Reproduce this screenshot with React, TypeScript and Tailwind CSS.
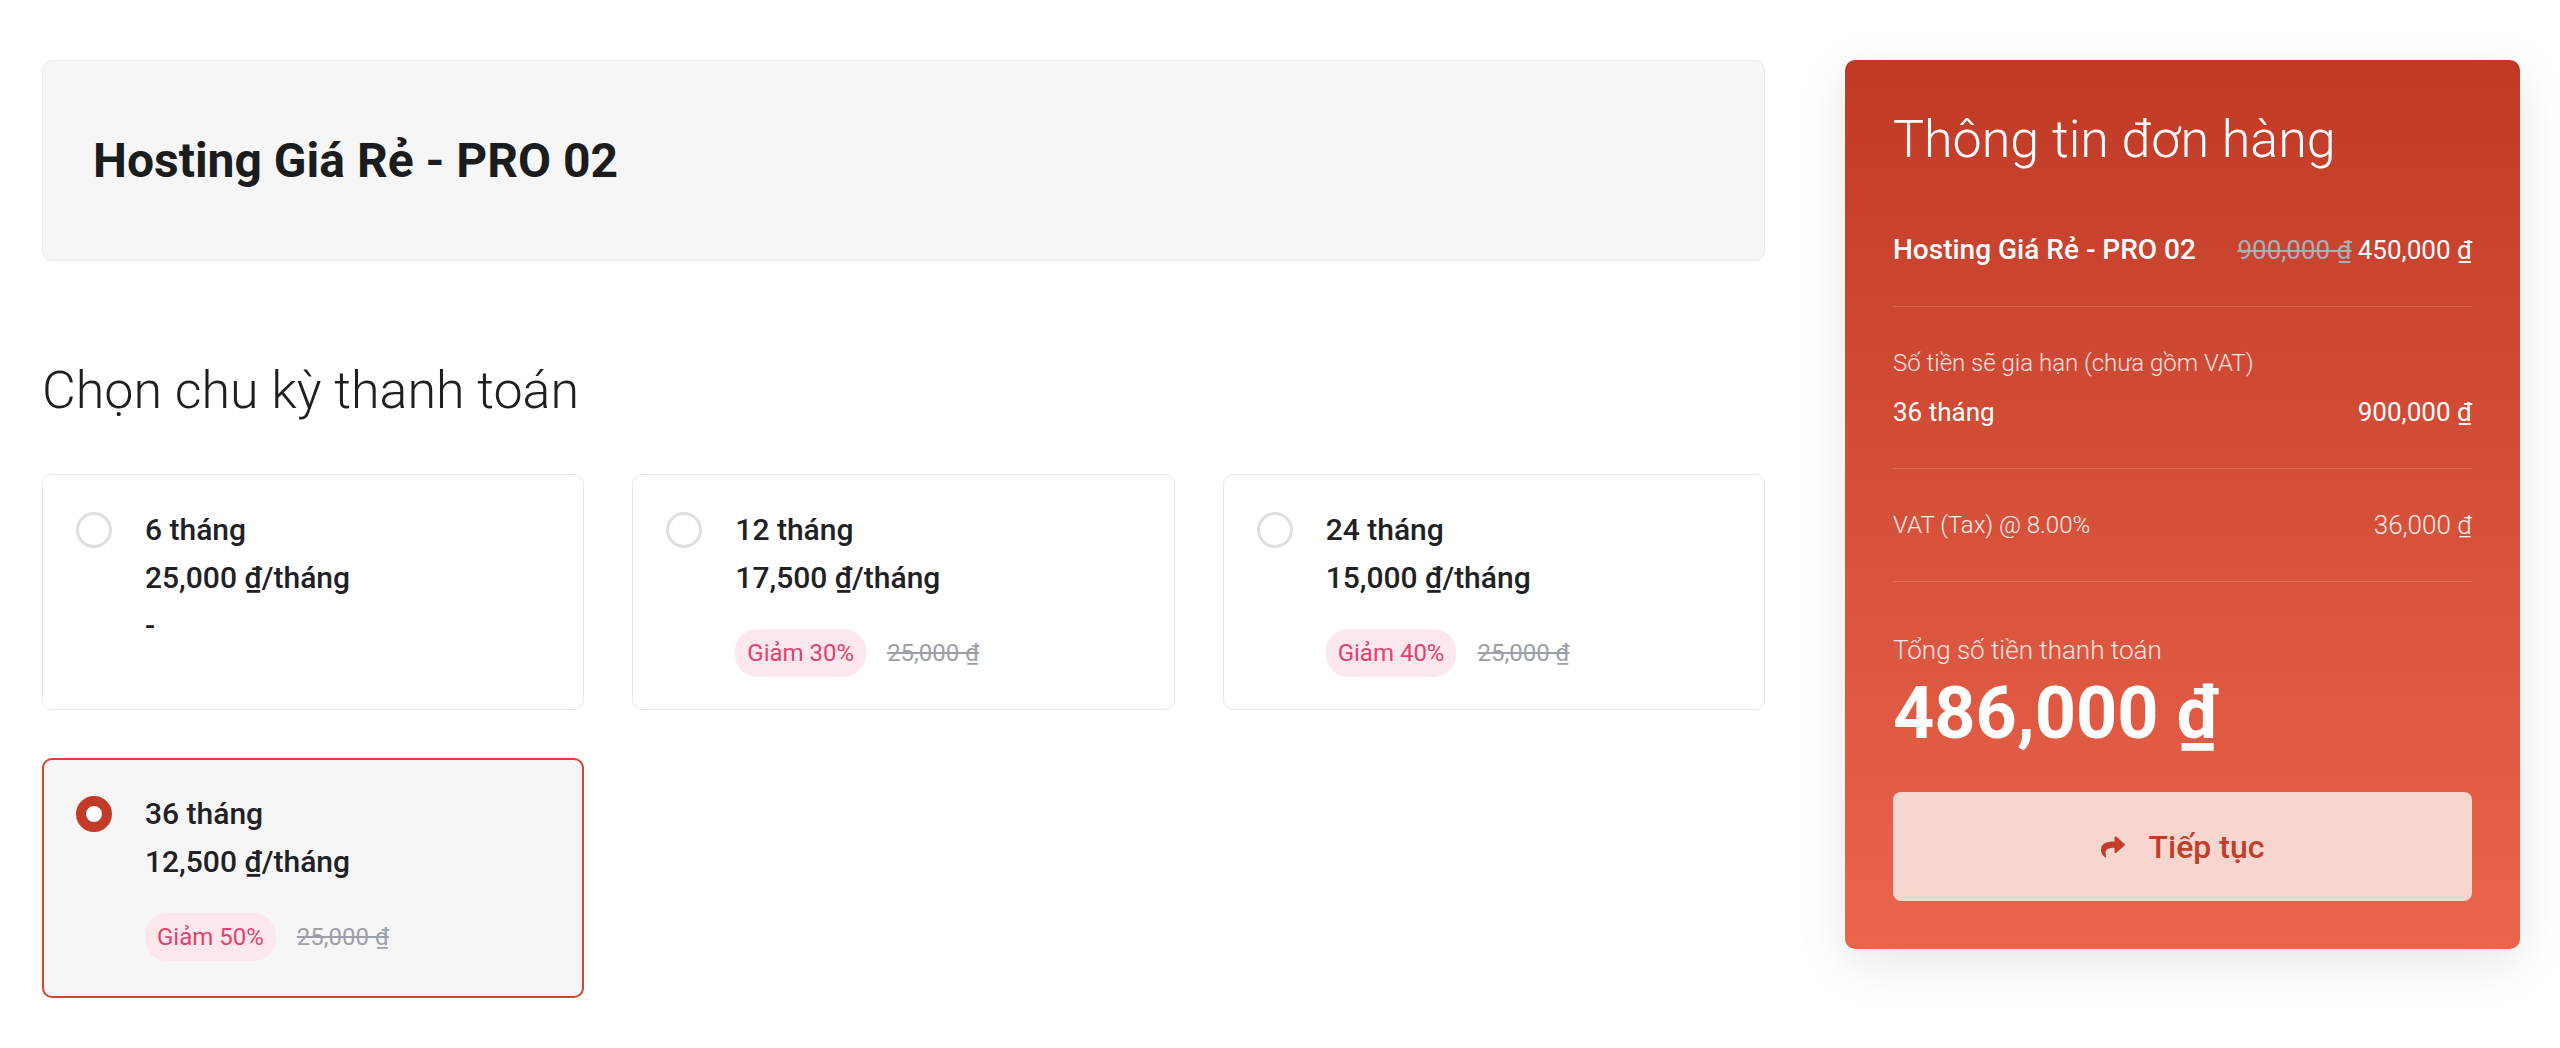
import { FaShare } from 'react-icons/fa';

interface Cycle {
  months: number;
  perMonth: string;
  discount?: string;
  selected?: boolean;
}

const CYCLES: Cycle[] = [
  { months: 6, perMonth: '25,000' },
  { months: 12, perMonth: '17,500', discount: 'Giảm 30%' },
  { months: 24, perMonth: '15,000', discount: 'Giảm 40%' },
  { months: 36, perMonth: '12,500', discount: 'Giảm 50%', selected: true },
];

function Radio({ checked }: { checked?: boolean }) {
  return checked ? (
    <span className="mt-[6px] block h-[36px] w-[36px] shrink-0 rounded-full border-[10px] border-[#c23b27] bg-white" />
  ) : (
    <span className="mt-[6px] block h-[36px] w-[36px] shrink-0 rounded-full border-[3px] border-[#dedfe2] bg-white" />
  );
}

function CycleCard({ cycle }: { cycle: Cycle }) {
  return (
    <div
      className={
        cycle.selected
          ? 'flex gap-[33px] rounded-[10px] border-2 border-[#d6452f] bg-[#f6f6f6] pl-[32px] pt-[30px] pb-[35px]'
          : 'flex gap-[33px] rounded-[10px] border border-[#e8e8ea] bg-white pl-[33px] pt-[31px] pb-[32px]'
      }
    >
      <Radio checked={cycle.selected} />
      <div className="text-[30px] font-medium leading-[48px] text-[#202124]">
        <div>{cycle.months} tháng</div>
        <div>{cycle.perMonth} ₫/tháng</div>
        {cycle.discount ? (
          <div className="mt-[27px] flex items-center gap-[21px]">
            <span className="flex h-[48px] items-center rounded-[22px] bg-[#fce8ec] px-[12px] text-[24px] font-normal text-[#e2426f]">
              {cycle.discount}
            </span>
            <span className="text-[24px] font-normal leading-[48px] text-[#9c9fa8] line-through">25,000 ₫</span>
          </div>
        ) : (
          <div>-</div>
        )}
      </div>
    </div>
  );
}

export default function App() {
  return (
    <div className="flex min-h-screen items-start gap-[80px] bg-white pl-[42px] pr-[40px] pt-[60px] font-['Roboto','Liberation_Sans',sans-serif]">
      {/* Left column */}
      <div className="min-w-0 flex-1">
        <div className="flex h-[201px] items-center rounded-[10px] border border-[#ebebec] bg-[#f6f6f6] px-[50px]">
          <h1 className="text-[48px] font-bold text-[#1b1c1e]">Hosting Giá Rẻ - PRO 02</h1>
        </div>

        <h2 className="mt-[100px] text-[52px] font-light leading-[60px] text-[#1f1f21]">Chọn chu kỳ thanh toán</h2>

        <div className="mt-[53px] grid grid-cols-3 gap-[48px]">
          {CYCLES.map((c) => (
            <CycleCard key={c.months} cycle={c} />
          ))}
        </div>
      </div>

      {/* Order summary */}
      <div className="w-[675px] shrink-0 rounded-[10px] bg-gradient-to-b from-[#c03a26] to-[#eb654c] px-12 pt-12 pb-12 text-white shadow-[0_14px_50px_rgba(0,0,0,0.10)]">
        <h3 className="mb-[22px] text-[52px] font-light leading-[64px]">Thông tin đơn hàng</h3>

        <div className="flex items-center justify-between border-b border-white/15 py-9 leading-10">
          <span className="text-[28px] font-medium">Hosting Giá Rẻ - PRO 02</span>
          <span className="text-[26px]">
            <span className="text-[#a9b0b4] line-through">900,000 ₫</span>
            <span className="ml-[6px]">450,000 ₫</span>
          </span>
        </div>

        <div className="border-b border-white/15 py-9">
          <div className="text-[24px] font-light leading-10 text-white/85">Số tiền sẽ gia hạn (chưa gồm VAT)</div>
          <div className="mt-[9px] flex items-center justify-between text-[26px] leading-10">
            <span>36 tháng</span>
            <span>900,000 ₫</span>
          </div>
        </div>

        <div className="flex items-center justify-between border-b border-white/15 py-9 font-light leading-10 text-white/90">
          <span className="text-[24px]">VAT (Tax) @ 8.00%</span>
          <span className="text-[26px]">36,000 ₫</span>
        </div>

        <div className="pt-12">
          <div className="text-[26px] font-light leading-10 text-white/85">Tổng số tiền thanh toán</div>
          <div className="mt-1 text-[72px] font-bold leading-[80px]">486,000 ₫</div>
        </div>

        <button className="mt-[38px] flex h-[109px] w-full items-center justify-center gap-[24px] rounded-[8px] bg-[#f7d6d0] text-[32px] font-medium text-[#c43d28]">
          <FaShare className="h-[24px] w-[24px]" />
          <span>Tiếp tục</span>
        </button>
      </div>
    </div>
  );
}
